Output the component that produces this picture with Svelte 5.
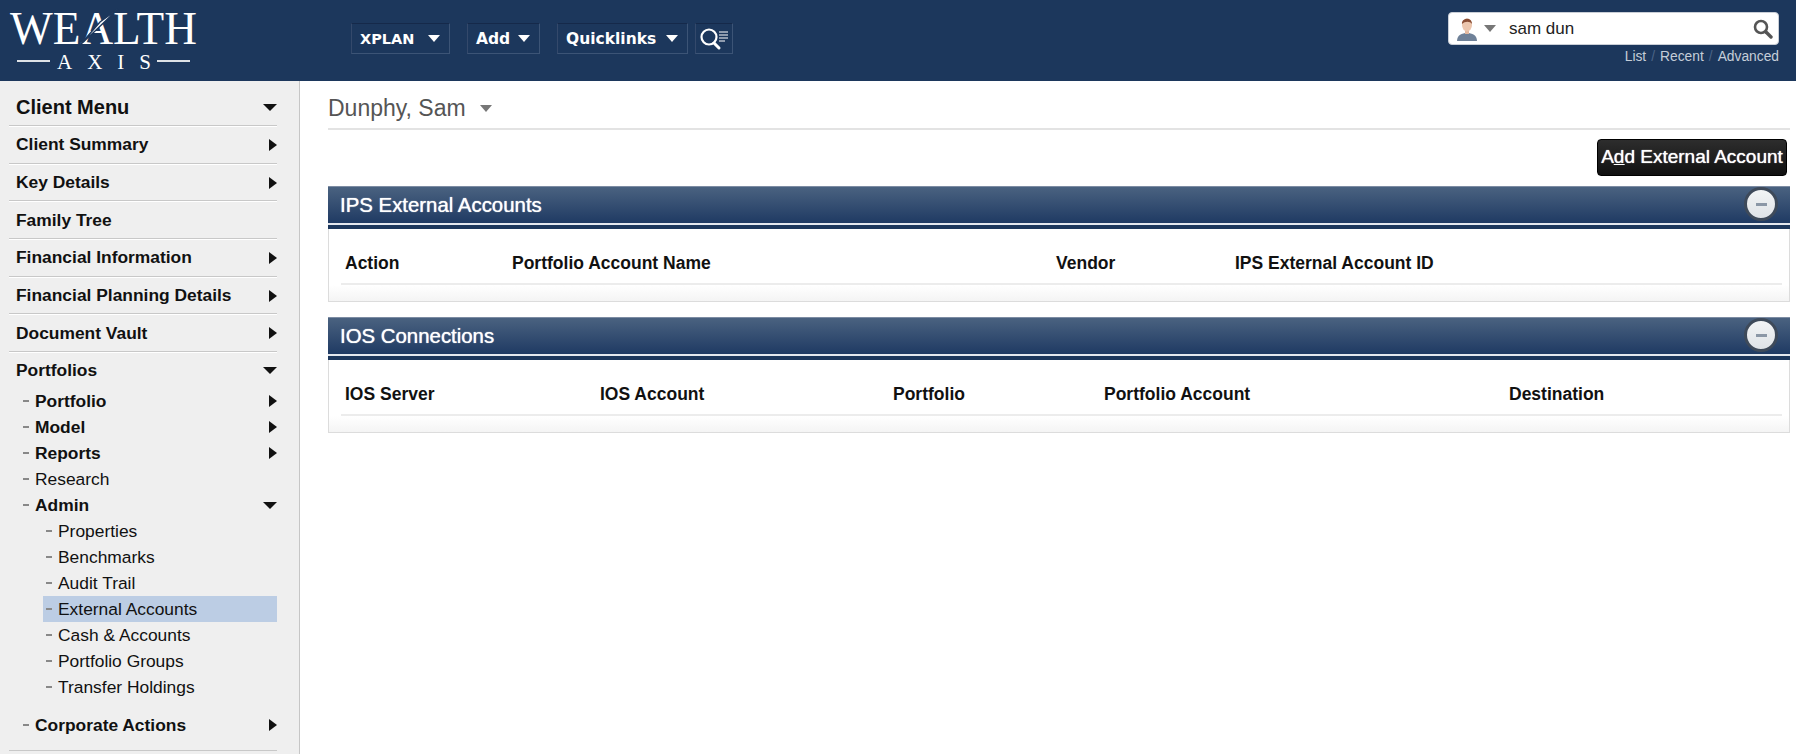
<script>
  const top = [
    { label: 'Client Summary', arrow: 'right' },
    { label: 'Key Details', arrow: 'right' },
    { label: 'Family Tree' },
    { label: 'Financial Information', arrow: 'right' },
    { label: 'Financial Planning Details', arrow: 'right' },
    { label: 'Document Vault', arrow: 'right' }
  ];
  const sub = [
    { label: 'Portfolio', bold: true, arrow: 'right' },
    { label: 'Model', bold: true, arrow: 'right' },
    { label: 'Reports', bold: true, arrow: 'right' },
    { label: 'Research' },
    { label: 'Admin', bold: true, arrow: 'down' }
  ];
  const admin = ['Properties', 'Benchmarks', 'Audit Trail', 'External Accounts', 'Cash & Accounts', 'Portfolio Groups', 'Transfer Holdings'];
  const panels = [
    { title: 'IPS External Accounts', cols: [['Action', 167], ['Portfolio Account Name', 544], ['Vendor', 179], ['IPS External Account ID', 0]] },
    { title: 'IOS Connections', cols: [['IOS Server', 255], ['IOS Account', 293], ['Portfolio', 211], ['Portfolio Account', 405], ['Destination', 0]] }
  ];
</script>

<div class="page">
  <header class="top">
    <div class="logo">
      <svg width="200" height="66" viewBox="0 0 200 66">
        <text class="wealth" x="10" y="44" textLength="187" lengthAdjust="spacingAndGlyphs">WEALTH</text>
        <path d="M118 9 L100 22 L80 45 L94 32 Z" fill="#fff" stroke="#1c375c" stroke-width="1.4" />
        <line x1="17" y1="61" x2="50" y2="61" class="rule" />
        <line x1="157" y1="61" x2="190" y2="61" class="rule" />
        <text class="axis" x="57" y="69" textLength="94">AXIS</text>
      </svg>
    </div>
    <nav class="nav">
      <button class="navbtn xplan">XPLAN<i class="caret"></i></button>
      <button class="navbtn add">Add<i class="caret"></i></button>
      <button class="navbtn ql">Quicklinks<i class="caret"></i></button>
      <button class="navbtn icon" aria-label="Search list">
        <svg width="32" height="24" viewBox="0 0 32 24" fill="none" stroke="#fff">
          <circle cx="11" cy="10" r="7.5" stroke-width="2.2" />
          <path d="M16 16 L21 21" stroke-width="3" stroke-linecap="round" />
          <path d="M21 5h9M21 8h9M21 11h9M21 14h6" stroke-width="1.2" />
        </svg>
      </button>
    </nav>
    <div class="search">
      <div class="searchbox">
        <svg class="avatar" width="20" height="24" viewBox="0 0 20 24">
          <path d="M0 24 C0 18 5 16 10 16 C15 16 20 18 20 24 Z" fill="#6f8198" />
          <rect x="8" y="12" width="4" height="5" fill="#e3b9a0" />
          <ellipse cx="10" cy="8" rx="5" ry="6.5" fill="#ecc6ae" />
          <path d="M5 7 C4 1 15 -1 15 7 C13 4 8 4 5 7 Z" fill="#8a4e35" />
        </svg>
        <i class="caret grey"></i>
        <span class="query">sam dun</span>
        <svg class="glass" width="20" height="20" viewBox="0 0 20 20" fill="none" stroke="#555">
          <circle cx="8" cy="8" r="6" stroke-width="2.6" />
          <path d="M13 13 L18 18" stroke-width="3.4" stroke-linecap="round" />
        </svg>
      </div>
      <div class="links"><span>List</span><em>/</em><span>Recent</span><em>/</em><span>Advanced</span></div>
    </div>
  </header>

  <div class="main">
    <aside class="side">
      <div class="row head"><span>Client Menu</span><i class="down"></i></div>
      {#each top as t}
        <div class="row"><span>{t.label}</span>{#if t.arrow}<i class="right"></i>{/if}</div>
      {/each}
      <div class="group">
        <div class="gtitle"><span>Portfolios</span><i class="down"></i></div>
        {#each sub as s}
          <div class="sub" class:bold={s.bold}>
            <b class="dash"></b><span>{s.label}</span>
            {#if s.arrow === 'right'}<i class="right"></i>{:else if s.arrow === 'down'}<i class="down"></i>{/if}
          </div>
        {/each}
        <div class="adminlist">
          {#each admin as a}
            <div class="leaf" class:active={a === 'External Accounts'}><b class="dash"></b><span>{a}</span></div>
          {/each}
        </div>
        <div class="sub bold"><b class="dash"></b><span>Corporate Actions</span><i class="right"></i></div>
      </div>
    </aside>

    <main class="content">
      <div class="title"><h1>Dunphy, Sam</h1><i class="caret grey big"></i></div>
      <div class="actions">
        <button class="dark">A<u>d</u>d External Account</button>
      </div>
      {#each panels as p}
        <section class="panel">
          <div class="phead">
            <h2>{p.title}</h2>
            <button class="minus" aria-label="Collapse"><b></b></button>
          </div>
          <div class="pbar"></div>
          <div class="pbody">
            <div class="cols">
              {#each p.cols as c}
                <div class="col" style={c[1] ? `width:${c[1]}px` : ''}>{c[0]}</div>
              {/each}
            </div>
            <div class="pfoot"></div>
          </div>
        </section>
      {/each}
    </main>
  </div>
</div>

<style>
  :global(body) { margin: 0; background: #fff; }
  .page { width: 1796px; height: 754px; overflow: hidden; font-family: "Liberation Sans", Arial, sans-serif; color: #111; }
  .top { height: 81px; background: #1c375c; display: flex; align-items: flex-start; box-sizing: border-box; }
  .logo { width: 351px; height: 81px; flex: none; }
  .logo svg { display: block; overflow: visible; }
  .wealth { font: 46px "Liberation Serif", serif; fill: #fff; }
  .axis { font: 21px "Liberation Serif", serif; fill: #fff; }
  .rule { stroke: #fff; stroke-width: 2; opacity: .85; }

  .nav { display: flex; margin-top: 23px; width: 382px; flex: none; }
  .navbtn { height: 31px; box-sizing: border-box; background: transparent; border: 1px solid #3c5476; border-top-color: #15294a; border-left-color: #34496b; color: #fff; font: bold 15.5px "DejaVu Sans", sans-serif; padding: 0 9px 0 8px; display: flex; align-items: center; justify-content: space-between; }
  .xplan { width: 99px; margin-right: 17px; font-size: 14.5px; }
  .add { width: 73px; margin-right: 17px; }
  .ql { width: 131px; margin-right: 7px; }
  .icon { width: 38px; padding: 0 2px; justify-content: center; }
  .caret { display: inline-block; width: 0; height: 0; border-left: 6.5px solid transparent; border-right: 6.5px solid transparent; border-top: 7px solid #fff; }
  .caret.grey { border-top-color: #777; }

  .search { margin-left: auto; margin-right: 17px; margin-top: 12px; width: 331px; }
  .searchbox { height: 33px; box-sizing: border-box; background: #fff; border: 1px solid #c9ced6; border-radius: 4px; display: flex; align-items: center; padding: 0 5px 0 8px; }
  .avatar { flex: none; }
  .searchbox .caret { margin: 0 13px 0 7px; }
  .query { font-size: 17px; color: #222; flex: 1; }
  .links { margin-top: 4px; text-align: right; font-size: 13.8px; color: #c5ced9; display: flex; justify-content: flex-end; }
  .links em { font-style: normal; color: #4b6487; margin: 0 5px; }

  .main { display: flex; height: 673px; }
  .side { flex: none; box-sizing: border-box; border-right: 1px solid #c6c6c6; background: #efefef; padding: 0 22px 0 9px; width: 300px; }
  .side span { white-space: nowrap; }
  i.right { margin-left: auto; width: 0; height: 0; border-top: 6px solid transparent; border-bottom: 6px solid transparent; border-left: 8px solid #111; }
  i.down { margin-left: auto; width: 0; height: 0; border-left: 7px solid transparent; border-right: 7px solid transparent; border-top: 7px solid #111; }
  .row { height: 37.7px; box-sizing: border-box; display: flex; align-items: center; padding: 1px 0 0 7px; font-weight: bold; font-size: 17.4px; border-bottom: 1px solid #c8c8c8; box-shadow: 0 1px 0 #fff; }
  .row.head { height: 45px; font-size: 20px; padding-top: 8px; }
  .group { border-bottom: 1px solid #c8c8c8; height: 399px; box-sizing: border-box; }
  .gtitle { height: 36px; display: flex; align-items: center; padding: 0 0 0 7px; font-weight: bold; font-size: 17.4px; }
  .sub { height: 26px; display: flex; align-items: center; padding-left: 14px; font-size: 17.4px; }
  .sub.bold { font-weight: bold; }
  .dash { width: 6px; height: 2.5px; background: #888; flex: none; margin-right: 6px; }
  .adminlist { margin: 0 0 12px 34px; }
  .leaf { height: 26px; display: flex; align-items: center; padding-left: 3px; font-size: 17.4px; }
  .leaf.active { background: #bccde4; }

  .content { flex: 1; padding: 0 6px 0 28px; min-width: 0; }
  .title { height: 49px; box-sizing: border-box; border-bottom: 2px solid #e3e3e3; padding-top: 7px; display: flex; align-items: center; }
  h1 { margin: 0; font-weight: normal; font-size: 23px; color: #555; }
  .caret.big { margin-left: 14px; }
  .actions { display: flex; justify-content: flex-end; padding: 9px 3px 0 0; height: 56px; box-sizing: border-box; }
  .dark { height: 37px; width: 190px; padding: 0 0 2px; box-sizing: border-box; background: linear-gradient(#2d2d2d, #111); border: 1px solid #000; border-radius: 4px; color: #fff; font: 19px "Liberation Sans", sans-serif; white-space: nowrap; text-shadow: 0 0 1px #fff; }
  .panel { margin-bottom: 15px; }
  .phead { height: 37px; box-sizing: border-box; border-top: 1px solid #7d8ca3; background: linear-gradient(#4a6280, #1f3a63); display: flex; align-items: center; padding-left: 12px; position: relative; }
  h2 { margin: 0; color: #fff; font-weight: normal; font-size: 20.4px; text-shadow: 0 0 1px #fff; }
  .minus { position: absolute; right: 12px; top: 0; width: 34px; height: 34px; padding: 0; box-sizing: border-box; border-radius: 50%; border: 3px solid #3e4a5a; background: linear-gradient(#f2f4f5, #dfe3e7); display: flex; align-items: center; justify-content: center; }
  .minus b { width: 11px; height: 3px; background: #8b97a6; }
  .pbar { height: 6px; box-sizing: border-box; border-top: 2px solid #e4e8ee; background: #1c375c; }
  .pbody { box-sizing: border-box; border: 1px solid #dcdcdc; border-top: none; padding: 0 7px 0 12px; background: #fff; height: 73px; }
  .cols { height: 56px; box-sizing: border-box; border-bottom: 2px solid #ececec; display: flex; align-items: center; padding-left: 4px; font-weight: bold; font-size: 17.5px; padding-top: 14px; }
  .col { flex: none; white-space: nowrap; }
  .pfoot { margin: 0 -7px 0 -12px; height: 16px; background: linear-gradient(#fff, #f4f4f4); }
</style>
